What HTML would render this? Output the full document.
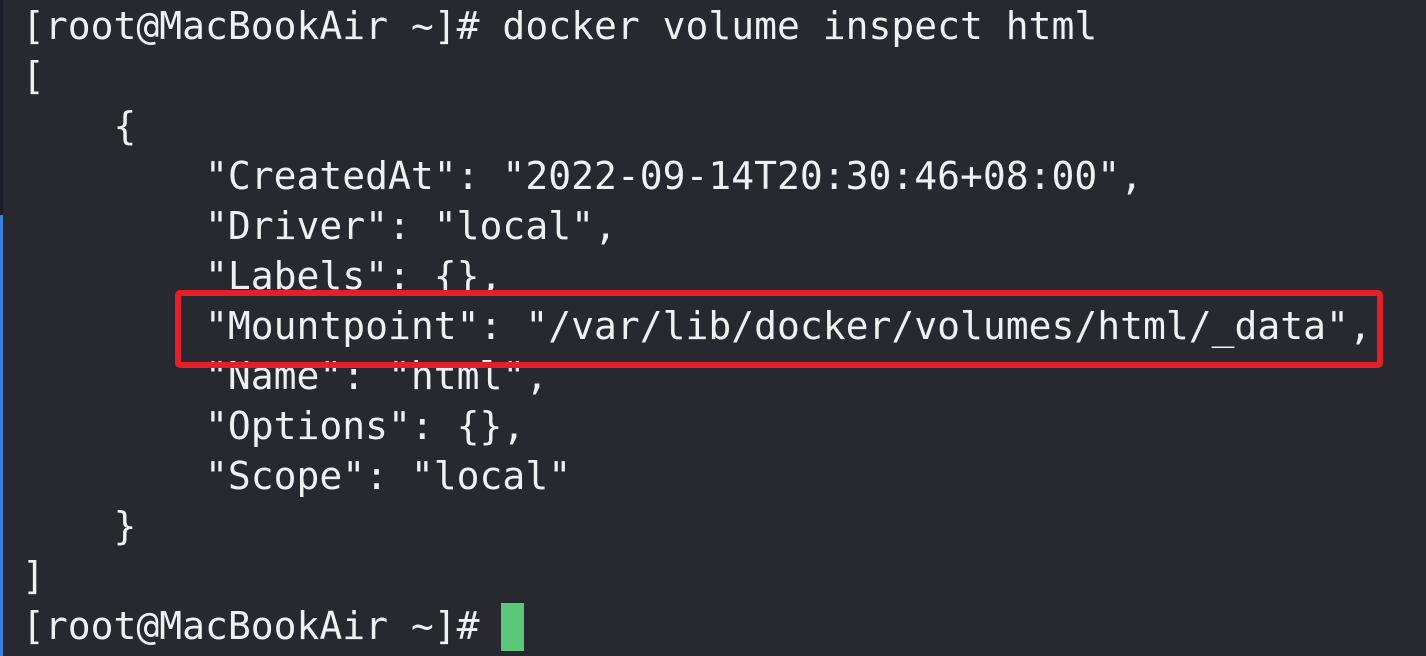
<!DOCTYPE html>
<html><head><meta charset="utf-8"><style>
html,body{margin:0;padding:0;}
body{width:1426px;height:656px;background:#272830;overflow:hidden;position:relative;}
pre{position:absolute;left:22px;top:1px;margin:0;font-family:"DejaVu Sans Mono","Liberation Mono",monospace;font-size:38px;line-height:50px;color:#eef0f2;}
.box{position:absolute;left:175px;top:290px;width:1196px;height:66px;border:6px solid #e3202a;border-radius:5px;}
.cur{position:absolute;left:501px;top:603px;width:23px;height:48px;background:#5ac77a;}
.bar{position:absolute;left:0;top:215px;width:3px;height:441px;background:#3b7fe0;}
.top{position:absolute;left:0;top:0;width:3px;height:215px;background:#1c1d28;}
</style></head><body>
<div class="top"></div><div class="bar"></div>
<pre>[root@MacBookAir ~]# docker volume inspect html
[
    {
        "CreatedAt": "2022-09-14T20:30:46+08:00",
        "Driver": "local",
        "Labels": {},
        "Mountpoint": "/var/lib/docker/volumes/html/_data",
        "Name": "html",
        "Options": {},
        "Scope": "local"
    }
]
[root@MacBookAir ~]# </pre>
<div class="box"></div>
<div class="cur"></div>
</body></html>
